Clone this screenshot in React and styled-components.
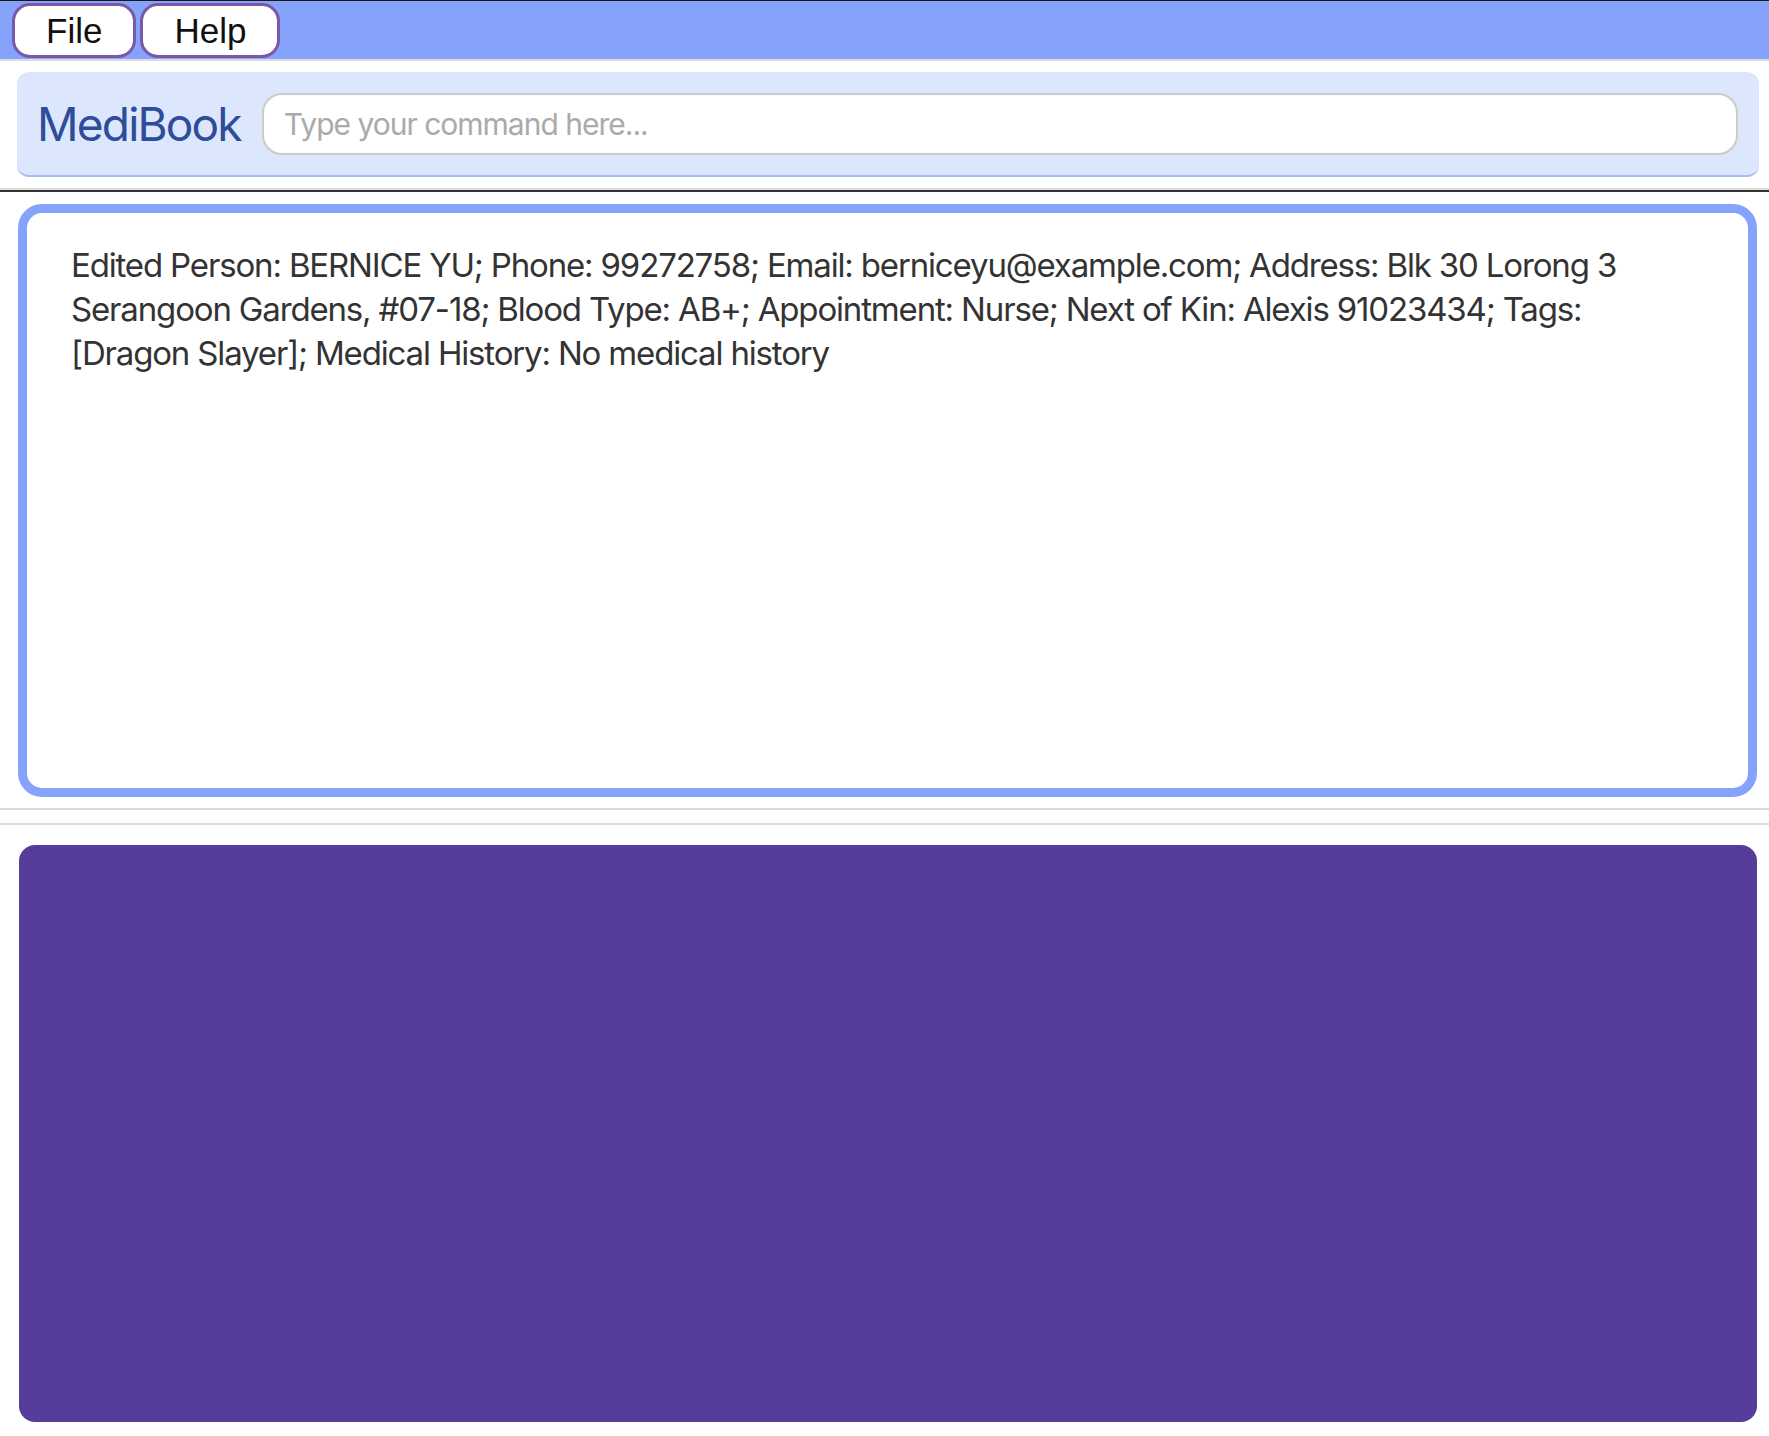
import React from "react";
import styled, { createGlobalStyle } from "styled-components";

const GlobalStyle = createGlobalStyle`
  html, body {
    margin: 0;
    padding: 0;
    background: #ffffff;
  }
  body {
    border-top: 1px solid #1a1a1a;
    font-family: Inter, "Noto Sans", sans-serif;
  }
`;

const Page = styled.div`
  display: flex;
  flex-direction: column;
  height: 1435px;
`;

const MenuBar = styled.div`
  display: flex;
  gap: 4px;
  height: 60px;
  padding: 2px 12px 0;
  box-sizing: border-box;
  background: #86a3fb;
  border-bottom: 2px solid #dcdcdc;
`;

const MenuButton = styled.button`
  height: 55px;
  padding: 0 ${(p) => p.$pad}px;
  background: #ffffff;
  border: 3px solid #7a58a7;
  border-radius: 18px;
  font-family: "Liberation Sans", Arial, sans-serif;
  font-size: 35px;
  color: #111;
  cursor: pointer;
`;

const CommandSection = styled.div`
  padding: 11px 10px 13px 17px;
  border-bottom: 2px solid #333;
  box-shadow: 0 -2px 0 #dddddd inset;
`;

const CommandPanel = styled.div`
  display: flex;
  align-items: center;
  gap: 21px;
  height: 105px;
  box-sizing: border-box;
  padding: 0 21px 0 20px;
  background: #dce6fd;
  border-radius: 12px;
  border-bottom: 2px solid #a5bdfb;
`;

const Brand = styled.div`
  font-size: 46px;
  font-weight: 400;
  letter-spacing: -1.8px;
  color: #2e4c99;
  white-space: nowrap;
`;

const CommandInput = styled.input`
  flex: 1;
  height: 62px;
  box-sizing: border-box;
  padding: 0 20px;
  border: 2px solid #cbcbcb;
  border-radius: 20px;
  background: #fff;
  font-family: Inter, "Noto Sans", sans-serif;
  font-size: 30px;
  letter-spacing: -1px;
  color: #333;
  outline: none;

  &::placeholder {
    color: #aaaaaa;
  }
`;

const ResultSection = styled.div`
  padding: 12px 12px 11px 18px;
  border-bottom: 2px solid #dadada;
`;

const ResultBox = styled.div`
  height: 593px;
  box-sizing: border-box;
  border: 9px solid #86a3fb;
  border-radius: 24px;
  padding: 30px 100px 0 44px;
  font-size: 33px;
  line-height: 44px;
  letter-spacing: -1.16px;
  color: #333;
`;

const Divider = styled.div`
  height: 13px;
  border-bottom: 2px solid #dadada;
`;

const ListSection = styled.div`
  flex: 1;
  padding: 20px 12px 14px 19px;
  display: flex;
`;

const PersonList = styled.div`
  flex: 1;
  background: #563c9b;
  border-radius: 16px;
`;

const result =
  "Edited Person: BERNICE YU; Phone: 99272758; Email: berniceyu@example.com; Address: Blk 30 Lorong 3 Serangoon Gardens, #07-18; Blood Type: AB+; Appointment: Nurse; Next of Kin: Alexis 91023434; Tags: [Dragon Slayer]; Medical History: No medical history";

const App = () => {
  return (
    <>
      <GlobalStyle />
      <Page>
        <MenuBar>
          <MenuButton $pad={31}>File</MenuButton>
          <MenuButton $pad={31}>Help</MenuButton>
        </MenuBar>
        <CommandSection>
          <CommandPanel>
            <Brand>MediBook</Brand>
            <CommandInput placeholder="Type your command here..." />
          </CommandPanel>
        </CommandSection>
        <ResultSection>
          <ResultBox>{result}</ResultBox>
        </ResultSection>
        <Divider />
        <ListSection>
          <PersonList />
        </ListSection>
      </Page>
    </>
  );
};

export default App;
